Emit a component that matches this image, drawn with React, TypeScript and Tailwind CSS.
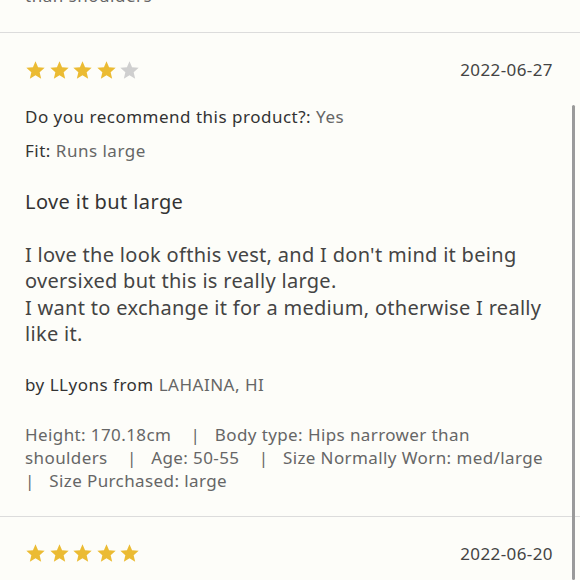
import React from "react";

const Star = ({ filled }: { filled: boolean }) => (
  <svg width="21" height="20" viewBox="0 0 24 24" className={filled ? "text-[#ebbb33]" : "text-[#cfcfcf]"}>
    <path
      fill="currentColor"
      d="M12 1.5l3.09 7.26 7.91.68-6 5.2 1.8 7.74L12 18.3l-6.8 4.08 1.8-7.74-6-5.2 7.91-.68z"
    />
  </svg>
);

const Stars = ({ n }: { n: number }) => (
  <div className="flex gap-[2.5px]">
    {[0, 1, 2, 3, 4].map((i) => (
      <Star key={i} filled={i < n} />
    ))}
  </div>
);

const SEP = "    |   ";

export default function App() {
  return (
    <div
      className="relative w-[580px] h-[580px] overflow-hidden bg-[#fdfdf9] text-[#333]"
      style={{ fontFamily: "'Noto Sans', Lato, sans-serif" }}
    >
      <div className="-mt-[16px] px-[25px] h-[48px] text-[17px] leading-[23px] tracking-[0.5px] text-[#666]">than shoulders</div>
      <div className="border-t border-[#dcdcdc]" />
      <div className="px-[25px]">
        <div className="flex items-center justify-between pt-[24px] pb-[20px]">
          <Stars n={4} />
          <div className="text-[17px] tracking-[0.4px] text-[#444] pr-[2px]">2022-06-27</div>
        </div>
        <div className="text-[17px] leading-[24px] tracking-[0.5px] mt-[2px]">
          <span className="text-[#333]">Do you recommend this product?:</span>{" "}
          <span className="text-[#666]">Yes</span>
        </div>
        <div className="text-[17px] leading-[24px] tracking-[0.5px] mt-[10px]">
          <span className="text-[#333]">Fit:</span> <span className="text-[#666]">Runs large</span>
        </div>
        <div className="text-[20px] leading-[28px] tracking-[0.4px] mt-[25px] text-[#333]">Love it but large</div>
        <div className="text-[20px] leading-[26.5px] tracking-[0.3px] mt-[26px] text-[#444]">
          I love the look ofthis vest, and I don't mind it being oversixed but this is really large.
          <br />
          I want to exchange it for a medium, otherwise I really like it.
        </div>
        <div className="text-[17px] leading-[24px] tracking-[0.5px] mt-[25px]">
          <span className="text-[#333]">by LLyons from</span> <span className="text-[#666]">LAHAINA, HI</span>
        </div>
        <div className="text-[17px] leading-[23px] tracking-[0.4px] mt-[26px] text-[#666] whitespace-pre-wrap">
          {"Height: 170.18cm" + SEP + "Body type: Hips narrower than shoulders" + SEP + "Age: 50-55" + SEP + "Size Normally Worn: med/large" + SEP + "Size Purchased: large"}
        </div>
      </div>
      <div className="border-t border-[#dcdcdc] mt-[24px]" />
      <div className="px-[25px] flex items-center justify-between pt-[24px]">
        <Stars n={5} />
        <div className="text-[17px] tracking-[0.4px] text-[#444] pr-[2px]">2022-06-20</div>
      </div>
      <div className="absolute right-[5px] top-[105px] bottom-0 w-[3px] rounded-full bg-[#9a9a9a]" />
    </div>
  );
}
